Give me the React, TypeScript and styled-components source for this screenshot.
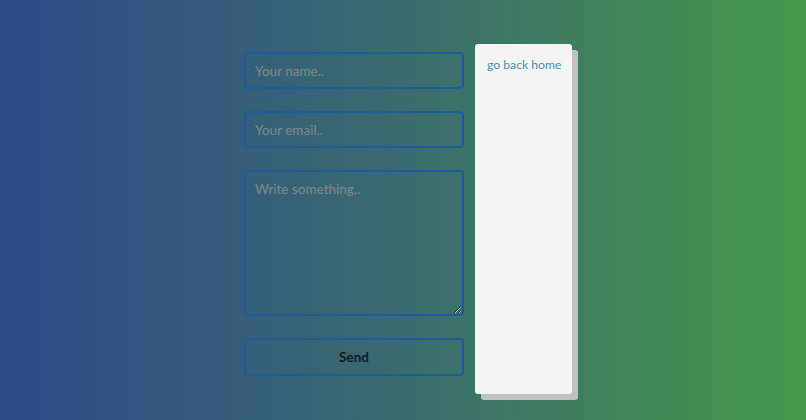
import React from "react";
import styled, { createGlobalStyle } from "styled-components";

const Global = createGlobalStyle`
  html, body { margin: 0; padding: 0; }
  body {
    width: 806px;
    height: 420px;
    overflow: hidden;
    background: linear-gradient(to right, #2e4a8b 0%, #3a6b6e 50%, #449a4a 100%);
    font-family: Lato, "Noto Sans", sans-serif;
  }
`;

const Page = styled.div`
  display: flex;
  justify-content: center;
  align-items: flex-start;
  gap: 11px;
  padding: 44px 0 0 10px;
  box-sizing: border-box;
  width: 806px;
  height: 420px;
`;

const Form = styled.form`
  display: flex;
  flex-direction: column;
  gap: 22px;
  width: 220px;
  margin-top: 8px;
`;

const fieldBase = `
  box-sizing: border-box;
  width: 220px;
  border: 2px solid #1a5c9c;
  border-radius: 4px;
  background: transparent;
  font-family: Lato, "Noto Sans", sans-serif;
  font-size: 13.5px;
  color: #223;
  outline: none;
  margin: 0;
  &::placeholder { color: #7a8b89; }
`;

const Input = styled.input`
  ${fieldBase}
  height: 37px;
  padding: 0 9px;
`;

const TextArea = styled.textarea`
  ${fieldBase}
  height: 146px;
  padding: 9px 9px;
  resize: vertical;
  display: block;
`;

const SendButton = styled.button`
  ${fieldBase}
  height: 38px;
  font-weight: 700;
  color: #151b1e;
  cursor: pointer;
`;

const Card = styled.div`
  box-sizing: border-box;
  width: 97px;
  height: 350px;
  background: #f4f4f4;
  border-radius: 3px;
  box-shadow: 6px 6px 0 #c2c2c2;
  padding: 9px 0 0 12px;
`;

const HomeLink = styled.a`
  color: #4290b2;
  font-size: 12.2px;
  text-decoration: none;
  white-space: nowrap;
`;

export default function App() {
  return (
    <>
      <Global />
      <Page>
        <Form onSubmit={(e) => e.preventDefault()}>
          <Input placeholder="Your name.." />
          <Input placeholder="Your email.." />
          <TextArea placeholder="Write something.." />
          <SendButton type="submit">Send</SendButton>
        </Form>
        <Card>
          <HomeLink href="#">go back home</HomeLink>
        </Card>
      </Page>
    </>
  );
}
